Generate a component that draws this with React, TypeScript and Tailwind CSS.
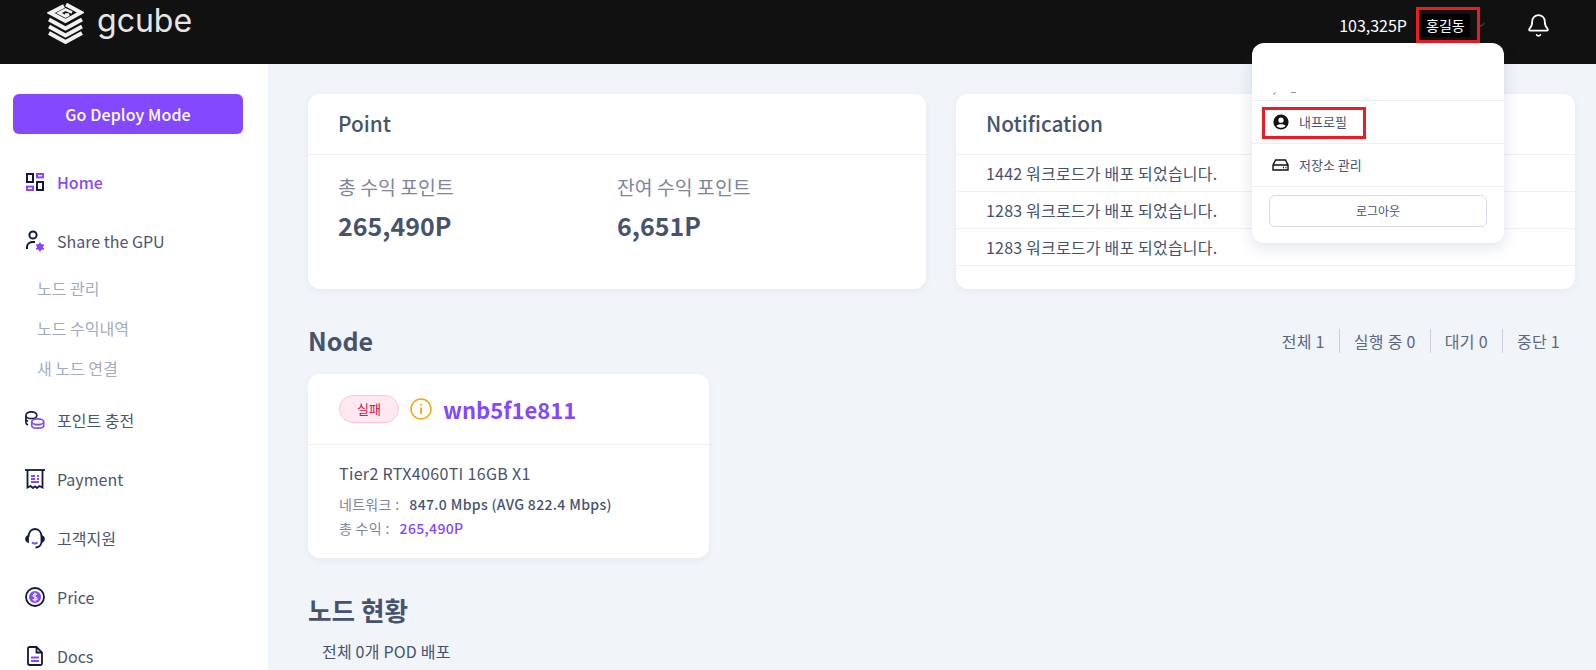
import { Bell, ChevronDown } from 'lucide-react'

const NAVY = '#0f1a3c'
const PURPLE = '#8448ff'

function LogoMark() {
    return <svg width="37" height="42" viewBox="0 0 37 42" fill="none" stroke="#f2f2f2" strokeWidth="3.9" strokeLinejoin="miter">
        <path d="M19 2.5 L34 10.5 L18.5 19 L3.5 11 L17 4" />
        <path d="M25 10.5 L18.5 7.5 L12 11 L18.5 14.5 L22 12.6 H18" strokeWidth="2.8" />
        <path d="M2 17.5 L18.5 26.5 L35 17.5" />
        <path d="M2 24.5 L18.5 33.5 L35 24.5" />
        <path d="M2 31 L18.5 40 L35 31" />
    </svg>
}

function HomeIcon() {
    return <svg width="18" height="18" viewBox="0 0 18 18" fill="none" strokeWidth="2">
        <rect x="1" y="1" width="6" height="8" stroke={NAVY} />
        <rect x="11" y="1" width="6" height="3.4" stroke={PURPLE} />
        <rect x="11" y="9" width="6" height="8" stroke={NAVY} />
        <rect x="1" y="13.6" width="6" height="3.4" stroke={PURPLE} />
    </svg>
}

function ShareIcon() {
    return <svg width="20" height="22" viewBox="0 0 20 22" fill="none" strokeWidth="2">
        <circle cx="8" cy="5" r="3.6" stroke={NAVY} />
        <path d="M2 19 V17 C2 13.5 5 12 8 12 H10" stroke={NAVY} />
        <circle cx="15" cy="17" r="2" stroke={PURPLE} strokeWidth="2.4" />
        <path d="M15 12.6 V21.4 M11.2 14.8 L18.8 19.2 M18.8 14.8 L11.2 19.2" stroke={PURPLE} strokeWidth="1.6" />
    </svg>
}

function PointIcon() {
    return <svg width="22" height="20" viewBox="0 0 22 20" fill="none" strokeWidth="1.8">
        <path d="M1 5 C1 2.5 4 1 7 1 C10 1 13 2.5 13 5 C13 7 10 8.4 7 8.4 C4 8.4 1 7 1 5 Z M1 5 V13 C1 14 2 15 3.4 15.4 M1 9.5 C1.4 10.2 2.4 11 3.4 11.2" stroke={NAVY} />
        <ellipse cx="14" cy="12" rx="6.6" ry="3.2" stroke={PURPLE} />
        <path d="M7.4 12 V16 C7.4 18 10.4 19 14 19 C17.6 19 20.6 18 20.6 16 V12 M10 15 H18" stroke={PURPLE} />
    </svg>
}

function PaymentIcon() {
    return <svg width="20" height="20" viewBox="0 0 20 20" fill="none" strokeWidth="1.8">
        <path d="M0 1 H20" stroke={NAVY} />
        <path d="M2.5 1 V18.5 L5.5 17 L8 19 L10 17.4 L12 19 L14.5 17 L17.5 18.5 V1" stroke={NAVY} />
        <path d="M6 7 H10 M12 7 H14 M6 10 H10 M12 10 H14 M6 13 H14" stroke={PURPLE} />
    </svg>
}

function SupportIcon() {
    return <svg width="20" height="21" viewBox="0 0 20 21" fill="none" strokeWidth="1.8">
        <path d="M3.5 9 C3.5 4.5 6 1 10 1 C14 1 16.5 4.5 16.5 9 V14 C16.5 17 14 19.5 10.5 19.5" stroke={NAVY} />
        <path d="M3 8 C1.6 8.6 1 9.6 1 11 C1 12.4 1.6 13.4 3 14 Z M17 8 C18.4 8.6 19 9.6 19 11 C19 12.4 18.4 13.4 17 14 Z" stroke={NAVY} />
        <path d="M7 14.5 C8.5 15.6 11 15.6 12.5 14.5" stroke={PURPLE} strokeWidth="2" />
    </svg>
}

function PriceIcon() {
    return <svg width="20" height="20" viewBox="0 0 20 20" fill="none">
        <circle cx="10" cy="10" r="9" stroke={NAVY} strokeWidth="1.8" />
        <circle cx="10" cy="10" r="6" fill={PURPLE} />
        <path d="M12.2 7.6 C11.6 6.8 8 6.4 8 8.4 C8 10.4 12.2 9.6 12.2 11.6 C12.2 13.6 8.4 13.2 7.8 12.4 M10 5.4 V14.6" stroke="#fff" strokeWidth="1.1" />
    </svg>
}

function DocsIcon() {
    return <svg width="18" height="20" viewBox="0 0 18 20" fill="none" strokeWidth="1.8">
        <path d="M2 17.5 V2.5 C2 1.6 2.6 1 3.5 1 H10.5 L16 6.5 V17.5 C16 18.4 15.4 19 14.5 19 H3.5 C2.6 19 2 18.4 2 17.5 Z" stroke={NAVY} />
        <path d="M10.5 1 V6.5 H16" stroke={NAVY} />
        <path d="M5 11.5 H13 M5 15 H13" stroke={PURPLE} strokeWidth="2" />
    </svg>
}

function ProfileIcon() {
    return <svg width="16" height="16" viewBox="0 0 16 16">
        <circle cx="8" cy="8" r="7.6" fill="#111" />
        <circle cx="8" cy="6.2" r="2.6" fill="#fff" />
        <path d="M3.4 12 C4.4 9.8 11.6 9.8 12.6 12 C11.4 13.2 9.8 13.8 8 13.8 C6.2 13.8 4.6 13.2 3.4 12 Z" fill="#fff" />
    </svg>
}

function StorageIcon() {
    return <svg width="17" height="12" viewBox="0 0 17 12" fill="none" stroke="#111" strokeWidth="1.4">
        <path d="M3.6 1 H13.4 L16 6 V11 H1 V6 Z M1 6 H16" />
        <path d="M11 8.5 H12 M13.4 8.5 H14.4" />
    </svg>
}

function NavItem({ icon, label, active, className }: { icon: React.ReactNode, label: string, active?: boolean, className?: string }) {
    return <div className={`flex items-center h-6 pl-[25px] ${className ?? ''}`}>
        <div className="flex flex-none items-center justify-center w-[20px] mr-[12px]">{icon}</div>
        <span className={`text-[16px] ${active ? 'font-medium text-[#8448ff]' : 'text-[#4a5672]'}`}>{label}</span>
    </div>
}

function Sidebar() {
    return <aside className="flex-none w-[268px] h-full overflow-hidden bg-white pt-[30px] pl-[13px] pr-[25px]">
        <div className="flex justify-center items-center w-[230px] h-[40px] rounded-md bg-[#8448ff] text-white text-[16px] font-medium tracking-[0.1px]">Go Deploy Mode</div>
        <div className="-ml-[13px] -mr-[25px] pt-[36px]">
            <NavItem icon={<HomeIcon />} label="Home" active />
            <NavItem icon={<ShareIcon />} label="Share the GPU" className="mt-[35px]" />
            <div className="flex flex-col pl-[37px] pt-[24px] gap-[17px] text-[16px] leading-[23px] text-[#a3abc2]">
                <div>노드 관리</div>
                <div>노드 수익내역</div>
                <div>새 노드 연결</div>
            </div>
            <NavItem icon={<PointIcon />} label="포인트 충전" className="mt-[28px]" />
            <NavItem icon={<PaymentIcon />} label="Payment" className="mt-[35px]" />
            <NavItem icon={<SupportIcon />} label="고객지원" className="mt-[35px]" />
            <NavItem icon={<PriceIcon />} label="Price" className="mt-[35px]" />
            <NavItem icon={<DocsIcon />} label="Docs" className="mt-[35px]" />
        </div>
    </aside>
}

function Header() {
    return <header className="flex-none flex items-center h-[64px] bg-[#111111]">
        <div className="flex items-center pl-[47px] -mt-[19px]">
            <LogoMark />
            <span className="ml-[13px] text-[32px] leading-none -mt-[4px] font-normal text-[#e6e6e6] font-['Inter',sans-serif]">gcube</span>
        </div>
        <div className="ml-auto flex items-center -mt-[14px] pr-[45px]">
            <span className="text-[16px] text-white">103,325P</span>
            <div className="ml-[9px] flex items-center justify-start pl-[2px] w-[64px] h-[36px] border-[3px] border-[#ed1c24]">
                <span className="bg-black text-white text-[14px] px-[5px] leading-[23px]">홍길동</span>
            </div>
            <ChevronDown size={12} color="#5a6685" className="ml-[-5px]" />
            <Bell size={25} color="#fff" strokeWidth={1.7} className="ml-[39px]" />
        </div>
    </header>
}

function PointCard() {
    return <section className="w-[618px] h-[195px] rounded-xl bg-white shadow-[0_2px_8px_rgba(30,50,100,0.05)]">
        <div className="flex items-center h-[61px] pl-[30px] border-b border-[#eef0f5] text-[20.8px] font-medium text-[#46536f]">Point</div>
        <div className="flex pl-[30px] pt-[18px]">
            <div className="w-[279px]">
                <div className="text-[19.4px] text-[#7d869c] leading-[27px]">총 수익 포인트</div>
                <div className="text-[25px] font-bold text-[#46536f] leading-[40px] mt-[5px]">265,490P</div>
            </div>
            <div>
                <div className="text-[19.4px] text-[#7d869c] leading-[27px]">잔여 수익 포인트</div>
                <div className="text-[25px] font-bold text-[#46536f] leading-[40px] mt-[5px]">6,651P</div>
            </div>
        </div>
    </section>
}

function NotificationCard() {
    return <section className="flex-1 h-[195px] rounded-xl bg-white shadow-[0_2px_8px_rgba(30,50,100,0.05)]">
        <div className="flex items-center h-[61px] pl-[30px] border-b border-[#eef0f5] text-[20.8px] font-medium text-[#46536f]">Notification</div>
        {['1442 워크로드가 배포 되었습니다.', '1283 워크로드가 배포 되었습니다.', '1283 워크로드가 배포 되었습니다.'].map((text, i) =>
            <div key={i} className="flex items-center h-[37px] pl-[30px] border-b border-[#eef0f5] text-[16px] tracking-[0.2px] text-[#46536f]">{text}</div>
        )}
    </section>
}

function NodeCard() {
    return <section className="w-[401px] h-[184px] rounded-xl bg-white shadow-[0_2px_8px_rgba(30,50,100,0.05)]">
        <div className="flex items-center h-[71px] pl-[31px] border-b border-[#eef0f5]">
            <div className="flex justify-center items-center w-[60px] h-[28px] rounded-full border border-[#ffc4d6] bg-[#ffe8ef] text-[13px] text-[#e0114f]">실패</div>
            <svg className="ml-[11px]" width="22" height="22" viewBox="0 0 22 22" fill="none" stroke="#f5a70f" strokeWidth="1.5">
                <circle cx="11" cy="11" r="10" />
                <path d="M11 9.5 V16 M11 6 V7.6" strokeWidth="1.8" />
            </svg>
            <span className="ml-[11px] text-[22px] font-bold text-[#8448ff]">wnb5f1e811</span>
        </div>
        <div className="pl-[31px] pt-[16px]">
            <div className="text-[16px] tracking-[0.33px] leading-[24px] text-[#46536f]">Tier2 RTX4060TI 16GB X1</div>
            <div className="flex items-center h-[24px] mt-[7px] text-[14px]">
                <span className="tracking-[0.3px] text-[#7d869c]">네트워크 :</span>
                <span className="ml-[10px] font-medium tracking-[0.35px] text-[#46536f]">847.0 Mbps (AVG 822.4 Mbps)</span>
            </div>
            <div className="flex items-center h-[24px] text-[14px]">
                <span className="tracking-[0.3px] text-[#7d869c]">총 수익 :</span>
                <span className="ml-[10px] font-medium tracking-[0.35px] text-[#8448ff]">265,490P</span>
            </div>
        </div>
    </section>
}

function Dropdown() {
    return <div className="absolute top-[43px] left-[1252px] w-[252px] h-[200px] rounded-xl bg-white shadow-[0_4px_16px_rgba(30,50,100,0.14)] text-[#46536f]">
        <div className="relative h-[58px] border-b border-[#eceef3]">
            <div className="absolute left-[21px] top-[50px] w-[3px] h-px bg-[#8a93a8] -rotate-45" />
            <div className="absolute left-[39px] top-[49px] w-[5px] h-px bg-[#8a93a8]" />
        </div>
        <div className="relative flex items-center h-[43px] pl-[21px] border-b border-[#eceef3] text-[13px]">
            <ProfileIcon />
            <span className="ml-[10px]">내프로필</span>
            <div className="absolute left-[10px] top-[6px] w-[104px] h-[32px] border-[3px] border-[#ed1c24]" />
        </div>
        <div className="flex items-center h-[43px] pl-[20px] border-b border-[#eceef3] text-[13px]">
            <StorageIcon />
            <span className="ml-[10px]">저장소 관리</span>
        </div>
        <div className="px-[17px] pt-[8px]">
            <div className="flex justify-center items-center h-[32px] rounded-md border border-[#d8dce8] text-[12px]">로그아웃</div>
        </div>
    </div>
}

export default function App() {
    return <div className="relative flex flex-col w-[1596px] h-[670px] overflow-hidden bg-[#f1f4f9] font-['Noto_Sans_CJK_KR','Noto_Sans',sans-serif]">
        <Header />
        <div className="flex flex-1 min-h-0">
            <Sidebar />
            <main className="flex-1 min-w-0 pl-[40px] pr-[21px] pt-[30px]">
                <div className="flex gap-[30px]">
                    <PointCard />
                    <NotificationCard />
                </div>
                <div className="flex items-center h-[36px] mt-[34px]">
                    <h2 className="text-[25px] font-bold text-[#46536f]">Node</h2>
                    <div className="ml-auto flex items-center pr-[15px] text-[16px] tracking-[0.3px] text-[#5c6780]">
                        <span className="pr-[14px] border-r border-[#c9cedb] leading-[24px]">전체 1</span>
                        <span className="px-[14px] border-r border-[#c9cedb] leading-[24px]">실행 중 0</span>
                        <span className="px-[14px] border-r border-[#c9cedb] leading-[24px]">대기 0</span>
                        <span className="pl-[14px] leading-[24px]">중단 1</span>
                    </div>
                </div>
                <div className="mt-[15px]"><NodeCard /></div>
                <h2 className="mt-[34px] text-[25.6px] leading-[36px] font-bold text-[#46536f]">노드 현황</h2>
                <div className="mt-[11px] pl-[14px] text-[16px] tracking-[0.2px] text-[#46536f]">전체 0개 POD 배포</div>
            </main>
        </div>
        <Dropdown />
    </div>
}
